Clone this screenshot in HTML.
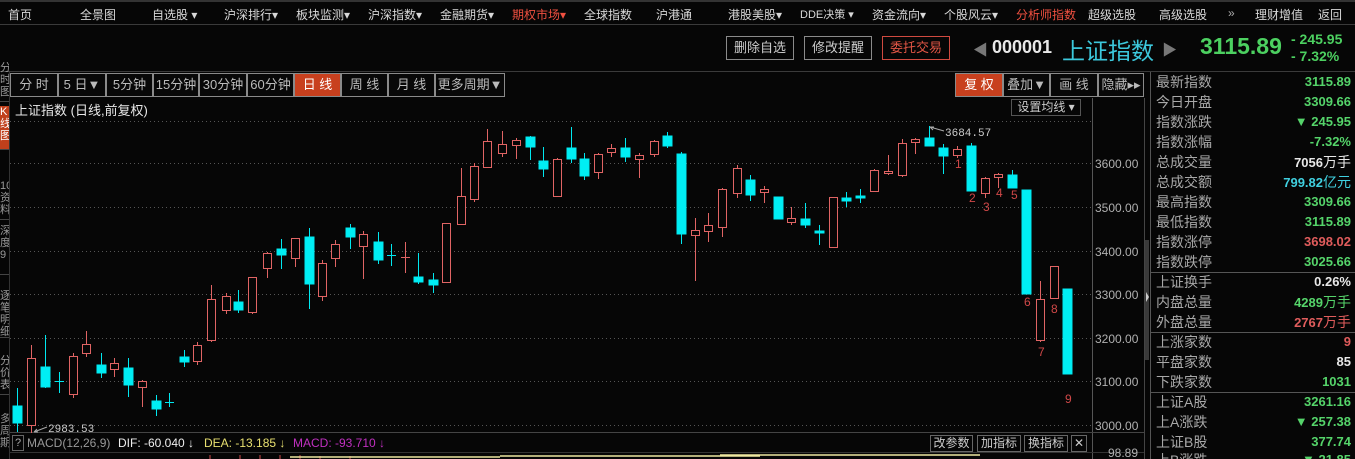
<!DOCTYPE html>
<html style="width:1355px;height:459px;overflow:hidden"><head><meta charset="utf-8"><style>
*{margin:0;padding:0;box-sizing:border-box}
html,body{overflow:hidden}
body{width:1355px;height:459px;background:#060606;position:relative;font-family:"Liberation Sans","Noto Sans CJK SC",sans-serif;color:#ccc}
#wrap{position:absolute;left:0;top:0;width:1355px;height:459px;overflow:hidden}
.a{position:absolute;white-space:nowrap}
.nav{font-size:12px;color:#d8d8d8;top:6px}
.nav.red{color:#f05040}
.btn{position:absolute;border:1px solid #8a8a8a;color:#ccc;font-size:13px;text-align:center}
.tb{position:absolute;top:73px;height:24px;border:1px solid #8a8a8a;color:#bbb;font-size:13px;line-height:22px;text-align:center;background:#080808}
.tb.on{background:#c8401e;color:#fff}
.lbl{position:absolute;left:1156px;font-size:14px;color:#a8a8a8;line-height:20px}
.val{position:absolute;right:4px;font-size:13px;font-weight:bold;line-height:20px;text-align:right}
.g{color:#55d46a}.w{color:#e8e8e8}.rr{color:#e05c5c}.cy{color:#40d0e0}
.yl{position:absolute;left:1095px;font-size:12px;color:#b0b0b0}
.ltab{position:absolute;left:0;width:9px;font-size:11px;color:#999;line-height:12px;overflow:hidden;border-bottom:1px solid #444}
</style></head><body><div id="wrap">
<div class="a" style="left:0;top:0;width:1355px;height:2px;background:#333"></div>
<div class="a" style="left:0;top:24px;width:1355px;height:1px;background:#3a3a3a"></div>
<div class="a nav" style="left:8px">首页</div>
<div class="a nav" style="left:80px">全景图</div>
<div class="a nav" style="left:152px">自选股 ▾</div>
<div class="a nav" style="left:224px">沪深排行▾</div>
<div class="a nav" style="left:296px">板块监测▾</div>
<div class="a nav" style="left:368px">沪深指数▾</div>
<div class="a nav" style="left:440px">金融期货▾</div>
<div class="a nav red" style="left:512px">期权市场▾</div>
<div class="a nav" style="left:584px">全球指数</div>
<div class="a nav" style="left:656px">沪港通</div>
<div class="a nav" style="left:728px">港股美股▾</div>
<div class="a nav" style="left:800px;font-size:11px">DDE决策 ▾</div>
<div class="a nav" style="left:872px">资金流向▾</div>
<div class="a nav" style="left:944px">个股风云▾</div>
<div class="a nav red" style="left:1016px">分析师指数</div>
<div class="a nav" style="left:1088px">超级选股</div>
<div class="a nav" style="left:1159px">高级选股</div>
<div class="a nav" style="left:1228px;color:#aaa">»</div>
<div class="a nav" style="left:1255px">理财增值</div>
<div class="a nav" style="left:1318px">返回</div>

<div class="btn" style="left:726px;top:36px;width:68px;height:24px;line-height:22px">删除自选</div>
<div class="btn" style="left:804px;top:36px;width:68px;height:24px;line-height:22px">修改提醒</div>
<div class="btn" style="left:882px;top:36px;width:68px;height:24px;line-height:22px;border-color:#d04a40;color:#e05545">委托交易</div>
<div class="a" style="left:973px;top:39px;font-size:15px;color:#777">◀</div>
<div class="a" style="left:992px;top:37px;font-size:18px;font-weight:bold;color:#e8e8e8">000001</div>
<div class="a" style="left:1062px;top:32px;font-size:23px;color:#3cc8dc">上证指数</div>
<div class="a" style="left:1162px;top:39px;font-size:15px;color:#777">▶</div>
<div class="a" style="left:1200px;top:33px;font-size:23px;font-weight:bold;color:#4cd060">3115.89</div>
<div class="a" style="left:1291px;top:31px;font-size:14px;font-weight:bold;color:#4cd060">- 245.95</div>
<div class="a" style="left:1291px;top:48px;font-size:14px;font-weight:bold;color:#4cd060">- 7.32%</div>
<div class="a" style="left:0;top:71px;width:1355px;height:1px;background:#3a3a3a"></div>

<div class="a" style="left:9px;top:72px;width:1px;height:387px;background:#333"></div>
<div class="ltab" style="top:62px;height:40px">分<br>时<br>图</div>
<div class="ltab" style="top:106px;height:44px;background:#c0401c;color:#fff">K<br>线<br>图</div>
<div class="ltab" style="top:180px;height:40px">10<br>资<br>料</div>
<div class="ltab" style="top:225px;height:50px">深<br>度<br>9</div>
<div class="ltab" style="top:290px;height:48px">逐<br>笔<br>明<br>细</div>
<div class="ltab" style="top:355px;height:40px">分<br>价<br>表</div>
<div class="ltab" style="top:413px;height:46px;border:none">多<br>周<br>期</div>

<div class="tb" style="left:10px;width:48px">分 时</div>
<div class="tb" style="left:58px;width:48px">5 日▼</div>
<div class="tb" style="left:106px;width:47px">5分钟</div>
<div class="tb" style="left:153px;width:46px">15分钟</div>
<div class="tb" style="left:199px;width:48px">30分钟</div>
<div class="tb" style="left:247px;width:47px">60分钟</div>
<div class="tb on" style="left:294px;width:47px">日 线</div>
<div class="tb" style="left:341px;width:47px">周 线</div>
<div class="tb" style="left:388px;width:47px">月 线</div>
<div class="tb" style="left:435px;width:70px">更多周期▼</div>
<div class="tb on" style="left:955px;width:48px">复 权</div>
<div class="tb" style="left:1003px;width:47px">叠加▼</div>
<div class="tb" style="left:1050px;width:48px">画 线</div>
<div class="tb" style="left:1098px;width:46px">隐藏▸▸</div>

<div class="a" style="left:15px;top:100px;font-size:13px;color:#e8e8e8">上证指数 (日线,前复权)</div>
<div class="btn" style="left:1011px;top:99px;width:70px;height:17px;font-size:12px;line-height:15px;border-color:#555">设置均线 ▾</div>

<svg class="a" style="left:0;top:0" width="1355" height="459">
<g stroke="#555" stroke-dasharray="1,3" stroke-width="1">
<line x1="10" x2="1092" y1="121.5" y2="121.5"/>
<line x1="10" x2="1092" y1="163.5" y2="163.5"/>
<line x1="10" x2="1092" y1="207.5" y2="207.5"/>
<line x1="10" x2="1092" y1="251.5" y2="251.5"/>
<line x1="10" x2="1092" y1="294.5" y2="294.5"/>
<line x1="10" x2="1092" y1="338.5" y2="338.5"/>
<line x1="10" x2="1092" y1="381.5" y2="381.5"/>
<line x1="10" x2="1092" y1="425.5" y2="425.5"/>
</g>
<line x1="1092.5" x2="1092.5" y1="98" y2="459" stroke="#555"/>
<line x1="1144.5" x2="1144.5" y1="98" y2="459" stroke="#444"/>
<line x1="1150.5" x2="1150.5" y1="72" y2="459" stroke="#555"/>
<rect x="1145" y="240" width="4" height="120" fill="#3a3a3a"/>
<path d="M1146 292 l3 5 l-3 5z" fill="#ccc"/>
<line x1="10" x2="1144" y1="432.5" y2="432.5" stroke="#444"/>
<line x1="10" x2="1144" y1="452.5" y2="452.5" stroke="#333"/>
<line x1="1151" x2="1355" y1="272.5" y2="272.5" stroke="#555"/>
<line x1="1151" x2="1355" y1="332.5" y2="332.5" stroke="#555"/>
<line x1="1151" x2="1355" y1="392.5" y2="392.5" stroke="#555"/>
<g stroke-width="1">
<g stroke="#00e8f0" fill="#00eef4">
<line x1="17.5" x2="17.5" y1="388" y2="432"/><rect x="13" y="406" width="9" height="17"/>
<line x1="45.5" x2="45.5" y1="335" y2="388"/><rect x="41" y="367" width="9" height="20"/>
<line x1="59.5" x2="59.5" y1="372" y2="393"/><line x1="55" x2="64" y1="381.5" y2="381.5"/>
<line x1="101.5" x2="101.5" y1="353" y2="378"/><rect x="97" y="365" width="9" height="8"/>
<line x1="128.5" x2="128.5" y1="358" y2="397"/><rect x="124" y="368" width="9" height="17"/>
<line x1="156.5" x2="156.5" y1="395" y2="416"/><rect x="152" y="401" width="9" height="8"/>
<line x1="169.5" x2="169.5" y1="393" y2="407"/><line x1="165" x2="174" y1="402.5" y2="402.5"/>
<line x1="184.5" x2="184.5" y1="350" y2="367"/><rect x="180" y="357" width="9" height="5"/>
<line x1="238.5" x2="238.5" y1="290" y2="313"/><rect x="234" y="302" width="9" height="8"/>
<line x1="281.5" x2="281.5" y1="239" y2="269"/><rect x="277" y="249" width="9" height="6"/>
<line x1="309.5" x2="309.5" y1="228" y2="309"/><rect x="305" y="237" width="9" height="47"/>
<line x1="350.5" x2="350.5" y1="224" y2="249"/><rect x="346" y="228" width="9" height="9"/>
<line x1="378.5" x2="378.5" y1="232" y2="264"/><rect x="374" y="242" width="9" height="18"/>
<line x1="391.5" x2="391.5" y1="244" y2="266"/><line x1="387" x2="396" y1="255.5" y2="255.5"/>
<line x1="418.5" x2="418.5" y1="253" y2="284"/><rect x="414" y="277" width="9" height="5"/>
<line x1="433.5" x2="433.5" y1="273" y2="293"/><rect x="429" y="280" width="9" height="5"/>
<line x1="530.5" x2="530.5" y1="136" y2="160"/><rect x="526" y="137" width="9" height="10"/>
<line x1="543.5" x2="543.5" y1="147" y2="177"/><rect x="539" y="161" width="9" height="8"/>
<line x1="571.5" x2="571.5" y1="127" y2="163"/><rect x="567" y="148" width="9" height="11"/>
<line x1="584.5" x2="584.5" y1="153" y2="180"/><rect x="580" y="159" width="9" height="17"/>
<line x1="625.5" x2="625.5" y1="138" y2="162"/><rect x="621" y="148" width="9" height="9"/>
<line x1="667.5" x2="667.5" y1="132" y2="148"/><rect x="663" y="136" width="9" height="10"/>
<line x1="681.5" x2="681.5" y1="152" y2="244"/><rect x="677" y="154" width="9" height="80"/>
<line x1="750.5" x2="750.5" y1="175" y2="201"/><rect x="746" y="180" width="9" height="15"/>
<line x1="778.5" x2="778.5" y1="197" y2="219"/><rect x="774" y="197" width="9" height="22"/>
<line x1="805.5" x2="805.5" y1="203" y2="228"/><rect x="801" y="219" width="9" height="6"/>
<line x1="819.5" x2="819.5" y1="225" y2="245"/><rect x="815" y="231" width="9" height="2"/>
<line x1="846.5" x2="846.5" y1="192" y2="207"/><rect x="842" y="198" width="9" height="3"/>
<line x1="860.5" x2="860.5" y1="189" y2="203"/><rect x="856" y="196" width="9" height="2"/>
<line x1="929.5" x2="929.5" y1="126" y2="146"/><rect x="925" y="138" width="9" height="8"/>
<line x1="943.5" x2="943.5" y1="144" y2="174"/><rect x="939" y="148" width="9" height="8"/>
<line x1="971.5" x2="971.5" y1="143" y2="191"/><rect x="967" y="146" width="9" height="45"/>
<line x1="1012.5" x2="1012.5" y1="170" y2="188"/><rect x="1008" y="175" width="9" height="13"/>
<rect x="1022" y="190" width="9" height="104"/>
<rect x="1063" y="289" width="9" height="85"/>
</g>
<g stroke="#e06464" fill="#060606">
<line x1="31.5" x2="31.5" y1="345" y2="433"/><rect x="27.5" y="358.5" width="8" height="67"/>
<line x1="73.5" x2="73.5" y1="353" y2="398"/><rect x="69.5" y="356.5" width="8" height="38"/>
<line x1="86.5" x2="86.5" y1="331" y2="357"/><rect x="82.5" y="344.5" width="8" height="9"/>
<line x1="114.5" x2="114.5" y1="358" y2="377"/><rect x="110.5" y="363.5" width="8" height="6"/>
<line x1="142.5" x2="142.5" y1="380" y2="407"/><rect x="138.5" y="381.5" width="8" height="6"/>
<line x1="197.5" x2="197.5" y1="342" y2="365"/><rect x="193.5" y="345.5" width="8" height="16"/>
<line x1="211.5" x2="211.5" y1="285" y2="342"/><rect x="207.5" y="299.5" width="8" height="41"/>
<line x1="226.5" x2="226.5" y1="293" y2="314"/><rect x="222.5" y="296.5" width="8" height="14"/>
<line x1="252.5" x2="252.5" y1="277" y2="314"/><rect x="248.5" y="277.5" width="8" height="35"/>
<line x1="267.5" x2="267.5" y1="252" y2="278"/><rect x="263.5" y="253.5" width="8" height="15"/>
<line x1="295.5" x2="295.5" y1="238" y2="267"/><rect x="291.5" y="238.5" width="8" height="20"/>
<line x1="322.5" x2="322.5" y1="260" y2="301"/><rect x="318.5" y="263.5" width="8" height="33"/>
<line x1="335.5" x2="335.5" y1="240" y2="267"/><rect x="331.5" y="244.5" width="8" height="14"/>
<line x1="363.5" x2="363.5" y1="231" y2="279"/><rect x="359.5" y="234.5" width="8" height="12"/>
<line x1="405.5" x2="405.5" y1="242" y2="273"/><line x1="401" x2="410" y1="257.5" y2="257.5"/>
<rect x="442.5" y="223.5" width="8" height="59"/>
<line x1="461.5" x2="461.5" y1="168" y2="225"/><rect x="457.5" y="196.5" width="8" height="28"/>
<line x1="474.5" x2="474.5" y1="163" y2="202"/><rect x="470.5" y="166.5" width="8" height="33"/>
<line x1="487.5" x2="487.5" y1="129" y2="168"/><rect x="483.5" y="141.5" width="8" height="26"/>
<line x1="502.5" x2="502.5" y1="131" y2="157"/><rect x="498.5" y="144.5" width="8" height="9"/>
<line x1="516.5" x2="516.5" y1="138" y2="159"/><rect x="512.5" y="140.5" width="8" height="5"/>
<line x1="557.5" x2="557.5" y1="158" y2="197"/><rect x="553.5" y="159.5" width="8" height="37"/>
<line x1="598.5" x2="598.5" y1="153" y2="179"/><rect x="594.5" y="154.5" width="8" height="18"/>
<line x1="611.5" x2="611.5" y1="144" y2="157"/><rect x="607.5" y="148.5" width="8" height="4"/>
<line x1="639.5" x2="639.5" y1="153" y2="178"/><rect x="635.5" y="155.5" width="8" height="4"/>
<line x1="654.5" x2="654.5" y1="140" y2="157"/><rect x="650.5" y="141.5" width="8" height="13"/>
<line x1="695.5" x2="695.5" y1="218" y2="281"/><rect x="691.5" y="230.5" width="8" height="5"/>
<line x1="708.5" x2="708.5" y1="213" y2="242"/><rect x="704.5" y="225.5" width="8" height="6"/>
<line x1="722.5" x2="722.5" y1="188" y2="237"/><rect x="718.5" y="189.5" width="8" height="38"/>
<line x1="737.5" x2="737.5" y1="165" y2="198"/><rect x="733.5" y="168.5" width="8" height="25"/>
<line x1="764.5" x2="764.5" y1="186" y2="203"/><rect x="760.5" y="189.5" width="8" height="3"/>
<line x1="791.5" x2="791.5" y1="207" y2="225"/><rect x="787.5" y="218.5" width="8" height="4"/>
<rect x="829.5" y="197.5" width="8" height="50"/>
<line x1="874.5" x2="874.5" y1="169" y2="192"/><rect x="870.5" y="170.5" width="8" height="21"/>
<line x1="888.5" x2="888.5" y1="155" y2="175"/><rect x="884.5" y="171.5" width="8" height="2"/>
<line x1="902.5" x2="902.5" y1="139" y2="177"/><rect x="898.5" y="143.5" width="8" height="32"/>
<line x1="915.5" x2="915.5" y1="138" y2="154"/><rect x="911.5" y="139.5" width="8" height="3"/>
<line x1="957.5" x2="957.5" y1="146" y2="158"/><rect x="953.5" y="149.5" width="8" height="6"/>
<line x1="985.5" x2="985.5" y1="177" y2="198"/><rect x="981.5" y="178.5" width="8" height="15"/>
<line x1="998.5" x2="998.5" y1="173" y2="188"/><rect x="994.5" y="174.5" width="8" height="3"/>
<line x1="1040.5" x2="1040.5" y1="281" y2="342"/><rect x="1036.5" y="299.5" width="8" height="41"/>
<rect x="1050.5" y="266.5" width="8" height="32"/>
</g>
</g>
<g fill="#d04848" font-family="Liberation Sans" font-size="12">
<text x="955" y="168">1</text><text x="969" y="202">2</text><text x="983" y="211">3</text><text x="996" y="197">4</text><text x="1011" y="199">5</text><text x="1024" y="306">6</text><text x="1038" y="356">7</text><text x="1051" y="313">8</text><text x="1065" y="403">9</text>
</g>
<g fill="#ccc" font-family="Liberation Mono" font-size="11">
<text x="945" y="136">3684.57</text><text x="48" y="432">2983.53</text>
</g>
<path d="M930 127 L944 131 M930 127 l4 0 M930 127 l3 3" stroke="#aaa" fill="none"/>
<path d="M34 432 L47 427 M34 432 l4 0 M34 432 l3 -3" stroke="#aaa" fill="none"/>
<g stroke="#d04848"><line x1="210" x2="210" y1="455" y2="459"/><line x1="240" x2="240" y1="455" y2="459"/><line x1="260" x2="260" y1="455" y2="459"/><line x1="280" x2="280" y1="455" y2="459"/><line x1="300" x2="300" y1="455" y2="459"/><line x1="320" x2="320" y1="456" y2="459"/><line x1="350" x2="350" y1="456" y2="459"/></g>
<path d="M290 457 H500 M500 456 H760 M720 455 H980" stroke="#eee8a0" stroke-width="1.5"/>
</svg>

<div class="yl" style="top:157px">3600.00</div>
<div class="yl" style="top:201px">3500.00</div>
<div class="yl" style="top:245px">3400.00</div>
<div class="yl" style="top:288px">3300.00</div>
<div class="yl" style="top:332px">3200.00</div>
<div class="yl" style="top:375px">3100.00</div>
<div class="yl" style="top:419px">3000.00</div>
<div class="yl" style="top:446px;left:1108px">98.89</div>

<div class="a" style="left:12px;top:435px;width:12px;height:16px;border:1px solid #666;font-size:11px;color:#aaa;text-align:center;line-height:14px">?</div>
<div class="a" style="left:27px;top:436px;font-size:12px;color:#999">MACD(12,26,9)</div>
<div class="a" style="left:118px;top:436px;font-size:12px;color:#eee">DIF: -60.040 ↓</div>
<div class="a" style="left:204px;top:436px;font-size:12px;color:#e8e070">DEA: -13.185 ↓</div>
<div class="a" style="left:293px;top:436px;font-size:12px;color:#c030c0">MACD: -93.710 ↓</div>
<div class="btn" style="left:930px;top:435px;width:43px;height:17px;font-size:12px;line-height:15px;border-color:#666">改参数</div>
<div class="btn" style="left:977px;top:435px;width:44px;height:17px;font-size:12px;line-height:15px;border-color:#666">加指标</div>
<div class="btn" style="left:1024px;top:435px;width:44px;height:17px;font-size:12px;line-height:15px;border-color:#666">换指标</div>
<div class="btn" style="left:1071px;top:435px;width:16px;height:17px;font-size:12px;line-height:15px;border-color:#666">✕</div>

<div class="lbl" style="top:72px">最新指数</div><div class="val g" style="top:72px">3115.89</div>
<div class="lbl" style="top:92px">今日开盘</div><div class="val g" style="top:92px">3309.66</div>
<div class="lbl" style="top:112px">指数涨跌</div><div class="val g" style="top:112px">▼ 245.95</div>
<div class="lbl" style="top:132px">指数涨幅</div><div class="val g" style="top:132px">-7.32%</div>
<div class="lbl" style="top:152px">总成交量</div><div class="val w" style="top:152px">7056<span style="font-weight:normal;font-size:14px">万手</span></div>
<div class="lbl" style="top:172px">总成交额</div><div class="val cy" style="top:172px">799.82<span style="font-weight:normal;font-size:14px">亿元</span></div>
<div class="lbl" style="top:192px">最高指数</div><div class="val g" style="top:192px">3309.66</div>
<div class="lbl" style="top:212px">最低指数</div><div class="val g" style="top:212px">3115.89</div>
<div class="lbl" style="top:232px">指数涨停</div><div class="val rr" style="top:232px">3698.02</div>
<div class="lbl" style="top:252px">指数跌停</div><div class="val g" style="top:252px">3025.66</div>
<div class="lbl" style="top:272px">上证换手</div><div class="val w" style="top:272px">0.26%</div>
<div class="lbl" style="top:292px">内盘总量</div><div class="val g" style="top:292px">4289<span style="font-weight:normal;font-size:14px">万手</span></div>
<div class="lbl" style="top:312px">外盘总量</div><div class="val rr" style="top:312px">2767<span style="font-weight:normal;font-size:14px">万手</span></div>
<div class="lbl" style="top:332px">上涨家数</div><div class="val rr" style="top:332px">9</div>
<div class="lbl" style="top:352px">平盘家数</div><div class="val w" style="top:352px">85</div>
<div class="lbl" style="top:372px">下跌家数</div><div class="val g" style="top:372px">1031</div>
<div class="lbl" style="top:392px">上证A股</div><div class="val g" style="top:392px">3261.16</div>
<div class="lbl" style="top:412px">上A涨跌</div><div class="val g" style="top:412px">▼ 257.38</div>
<div class="lbl" style="top:432px">上证B股</div><div class="val g" style="top:432px">377.74</div>
<div class="lbl" style="top:450px">上B涨跌</div><div class="val g" style="top:450px">▼ 21.85</div>
</div></body></html>
